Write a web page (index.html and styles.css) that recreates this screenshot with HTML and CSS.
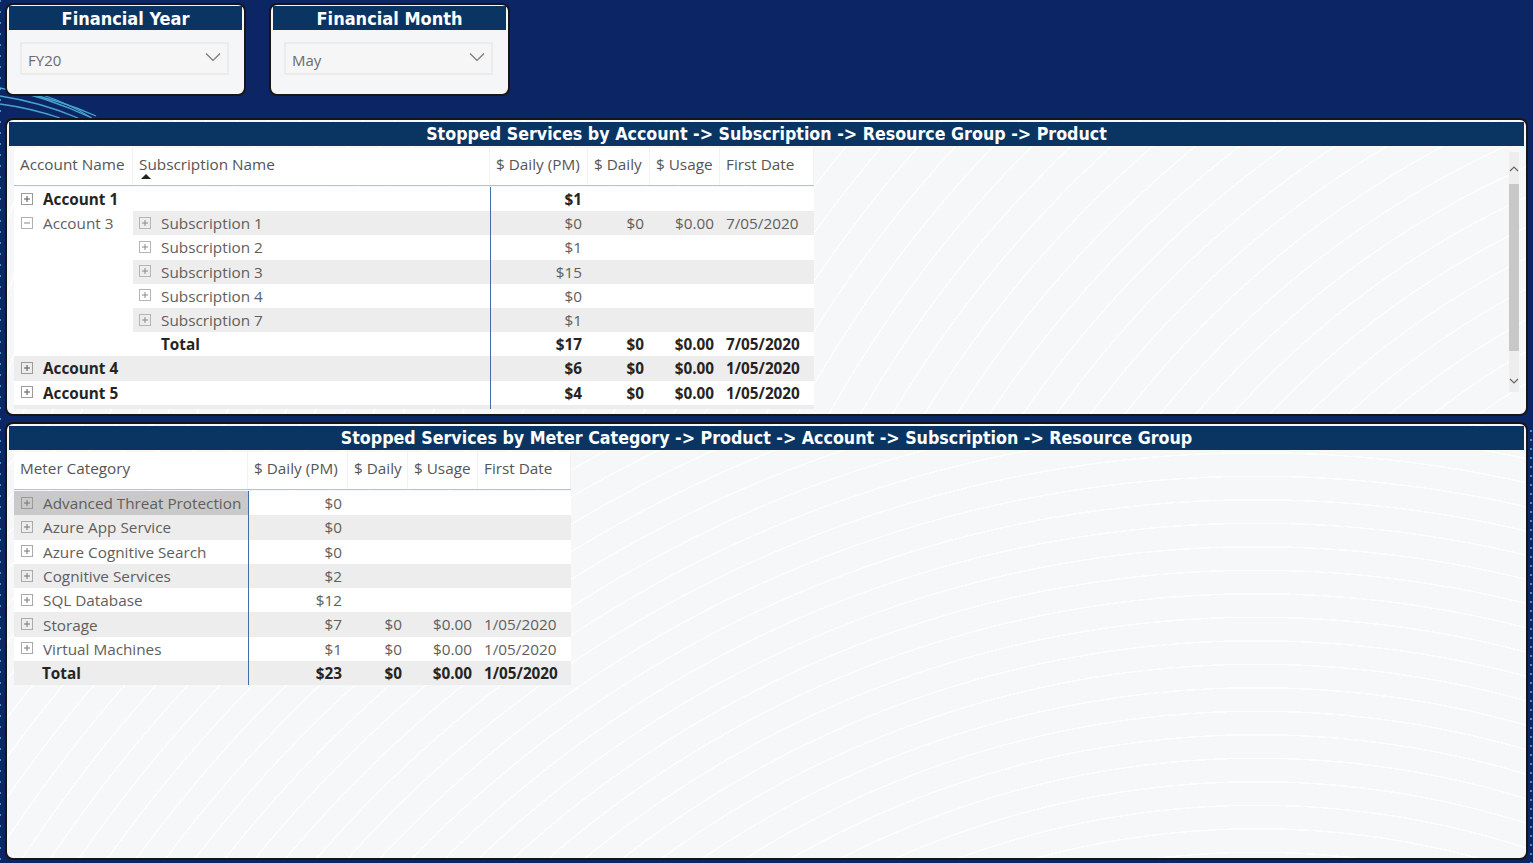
FILE: index.html
```html
<!DOCTYPE html>
<html>
<head>
<meta charset="utf-8">
<title>Stopped Services</title>
<link rel="stylesheet" href="styles.css">
</head>
<body>
<div class="page">
  <div class="slicers">
    <div class="slicer">
      <div class="slicer-title">Financial Year</div>
      <div class="dropdown"><span>FY20</span>
        <svg class="chev" width="16" height="10" viewBox="0 0 16 10"><path d="M1 1.5 L8 8.5 L15 1.5" fill="none" stroke="#777" stroke-width="1.2"/></svg>
      </div>
    </div>
    <div class="slicer">
      <div class="slicer-title">Financial Month</div>
      <div class="dropdown"><span>May</span>
        <svg class="chev" width="16" height="10" viewBox="0 0 16 10"><path d="M1 1.5 L8 8.5 L15 1.5" fill="none" stroke="#777" stroke-width="1.2"/></svg>
      </div>
    </div>
  </div>

  <div class="panel panel1">
    <div class="panel-title">Stopped Services by Account -&gt; Subscription -&gt; Resource Group -&gt; Product</div>
    <div class="panel-body">
      <div class="table t1">
        <div class="thead">
          <div class="th">Account Name</div>
          <div class="th">Subscription Name<div class="sort"></div></div>
          <div class="th r">$ Daily (PM)</div>
          <div class="th r">$ Daily</div>
          <div class="th r">$ Usage</div>
          <div class="th">First Date</div>
        </div>
        <div class="tbody">
          <div class="td b ic"><svg class="exp" viewBox="0 0 12 12"><rect x="0.5" y="0.5" width="11" height="11" fill="none" stroke="#9a9a9a"/><path d="M3 6H9M6 3V9" stroke="#555" stroke-width="1"/></svg>Account 1</div>
          <div class="td"></div>
          <div class="td r b vl">$1</div>
          <div class="td"></div><div class="td"></div><div class="td"></div>

          <div class="td ic acc3"><svg class="exp" viewBox="0 0 12 12"><rect x="0.5" y="0.5" width="11" height="11" fill="none" stroke="#b0b0b0"/><path d="M3 6H9" stroke="#888" stroke-width="1"/></svg>Account 3</div>
          <div class="td g ic2"><svg class="exp" viewBox="0 0 12 12"><rect x="0.5" y="0.5" width="11" height="11" fill="none" stroke="#b5b5b5"/><path d="M3 6H9M6 3V9" stroke="#8a8a8a" stroke-width="1"/></svg>Subscription 1</div>
          <div class="td g r vl">$0</div><div class="td g r">$0</div><div class="td g r">$0.00</div><div class="td g">7/05/2020</div>

          <div class="td ic2"><svg class="exp" viewBox="0 0 12 12"><rect x="0.5" y="0.5" width="11" height="11" fill="none" stroke="#b5b5b5"/><path d="M3 6H9M6 3V9" stroke="#8a8a8a" stroke-width="1"/></svg>Subscription 2</div>
          <div class="td r vl">$1</div><div class="td"></div><div class="td"></div><div class="td"></div>

          <div class="td g ic2"><svg class="exp" viewBox="0 0 12 12"><rect x="0.5" y="0.5" width="11" height="11" fill="none" stroke="#b5b5b5"/><path d="M3 6H9M6 3V9" stroke="#8a8a8a" stroke-width="1"/></svg>Subscription 3</div>
          <div class="td g r vl">$15</div><div class="td g"></div><div class="td g"></div><div class="td g"></div>

          <div class="td ic2"><svg class="exp" viewBox="0 0 12 12"><rect x="0.5" y="0.5" width="11" height="11" fill="none" stroke="#b5b5b5"/><path d="M3 6H9M6 3V9" stroke="#8a8a8a" stroke-width="1"/></svg>Subscription 4</div>
          <div class="td r vl">$0</div><div class="td"></div><div class="td"></div><div class="td"></div>

          <div class="td g ic2"><svg class="exp" viewBox="0 0 12 12"><rect x="0.5" y="0.5" width="11" height="11" fill="none" stroke="#b5b5b5"/><path d="M3 6H9M6 3V9" stroke="#8a8a8a" stroke-width="1"/></svg>Subscription 7</div>
          <div class="td g r vl">$1</div><div class="td g"></div><div class="td g"></div><div class="td g"></div>

          <div class="td b tot1">Total</div>
          <div class="td r b vl">$17</div><div class="td r b">$0</div><div class="td r b">$0.00</div><div class="td b">7/05/2020</div>

          <div class="td g b ic"><svg class="exp" viewBox="0 0 12 12"><rect x="0.5" y="0.5" width="11" height="11" fill="none" stroke="#9a9a9a"/><path d="M3 6H9M6 3V9" stroke="#555" stroke-width="1"/></svg>Account 4</div>
          <div class="td g"></div>
          <div class="td g r b vl">$6</div><div class="td g r b">$0</div><div class="td g r b">$0.00</div><div class="td g b">1/05/2020</div>

          <div class="td b ic"><svg class="exp" viewBox="0 0 12 12"><rect x="0.5" y="0.5" width="11" height="11" fill="none" stroke="#9a9a9a"/><path d="M3 6H9M6 3V9" stroke="#555" stroke-width="1"/></svg>Account 5</div>
          <div class="td"></div>
          <div class="td r b vl">$4</div><div class="td r b">$0</div><div class="td r b">$0.00</div><div class="td b">1/05/2020</div>

          <div class="td g"></div><div class="td g"></div><div class="td g vl"></div><div class="td g"></div><div class="td g"></div><div class="td g"></div>
        </div>
      </div>
      <div class="scrollbar">
        <div class="sb-up"><svg width="10" height="7" viewBox="0 0 10 7"><path d="M1 6 L5 2 L9 6" fill="none" stroke="#666" stroke-width="1.2"/></svg></div>
        <div class="sb-thumb"></div>
        <div class="sb-fill"></div>
        <div class="sb-down"><svg width="10" height="7" viewBox="0 0 10 7"><path d="M1 1 L5 5 L9 1" fill="none" stroke="#666" stroke-width="1.2"/></svg></div>
      </div>
    </div>
  </div>

  <div class="panel panel2">
    <div class="panel-title">Stopped Services by Meter Category -&gt; Product -&gt; Account -&gt; Subscription -&gt; Resource Group</div>
    <div class="panel-body">
      <div class="table t2">
        <div class="thead">
          <div class="th">Meter Category</div>
          <div class="th r">$ Daily (PM)</div>
          <div class="th r">$ Daily</div>
          <div class="th r">$ Usage</div>
          <div class="th">First Date</div>
        </div>
        <div class="tbody">
          <div class="td sel ic"><svg class="exp" viewBox="0 0 12 12"><rect x="0.5" y="0.5" width="11" height="11" fill="none" stroke="#999"/><path d="M3 6H9M6 3V9" stroke="#777" stroke-width="1"/></svg>Advanced Threat Protection</div>
          <div class="td r vl">$0</div><div class="td"></div><div class="td"></div><div class="td"></div>

          <div class="td g ic"><svg class="exp" viewBox="0 0 12 12"><rect x="0.5" y="0.5" width="11" height="11" fill="none" stroke="#aaa"/><path d="M3 6H9M6 3V9" stroke="#777" stroke-width="1"/></svg>Azure App Service</div>
          <div class="td g r vl">$0</div><div class="td g"></div><div class="td g"></div><div class="td g"></div>

          <div class="td ic"><svg class="exp" viewBox="0 0 12 12"><rect x="0.5" y="0.5" width="11" height="11" fill="none" stroke="#aaa"/><path d="M3 6H9M6 3V9" stroke="#777" stroke-width="1"/></svg>Azure Cognitive Search</div>
          <div class="td r vl">$0</div><div class="td"></div><div class="td"></div><div class="td"></div>

          <div class="td g ic"><svg class="exp" viewBox="0 0 12 12"><rect x="0.5" y="0.5" width="11" height="11" fill="none" stroke="#aaa"/><path d="M3 6H9M6 3V9" stroke="#777" stroke-width="1"/></svg>Cognitive Services</div>
          <div class="td g r vl">$2</div><div class="td g"></div><div class="td g"></div><div class="td g"></div>

          <div class="td ic"><svg class="exp" viewBox="0 0 12 12"><rect x="0.5" y="0.5" width="11" height="11" fill="none" stroke="#aaa"/><path d="M3 6H9M6 3V9" stroke="#777" stroke-width="1"/></svg>SQL Database</div>
          <div class="td r vl">$12</div><div class="td"></div><div class="td"></div><div class="td"></div>

          <div class="td g ic"><svg class="exp" viewBox="0 0 12 12"><rect x="0.5" y="0.5" width="11" height="11" fill="none" stroke="#aaa"/><path d="M3 6H9M6 3V9" stroke="#777" stroke-width="1"/></svg>Storage</div>
          <div class="td g r vl">$7</div><div class="td g r">$0</div><div class="td g r">$0.00</div><div class="td g">1/05/2020</div>

          <div class="td ic"><svg class="exp" viewBox="0 0 12 12"><rect x="0.5" y="0.5" width="11" height="11" fill="none" stroke="#aaa"/><path d="M3 6H9M6 3V9" stroke="#777" stroke-width="1"/></svg>Virtual Machines</div>
          <div class="td r vl">$1</div><div class="td r">$0</div><div class="td r">$0.00</div><div class="td">1/05/2020</div>

          <div class="td g b tot2">Total</div>
          <div class="td g r b vl">$23</div><div class="td g r b">$0</div><div class="td g r b">$0.00</div><div class="td g b">1/05/2020</div>
        </div>
      </div>
    </div>
  </div>
</div>
</body>
</html>
```
FILE: styles.css
```css
* { box-sizing: border-box; }

body {
  margin: 0;
  width: 1533px;
  height: 863px;
  overflow: hidden;
  background-color: #0b2565;
  background-image: url("data:image/svg+xml;utf8,<svg xmlns='http://www.w3.org/2000/svg' width='1533' height='863'><g fill='none' stroke='%2357c6e6' stroke-width='1.3' opacity='0.8'><path d='M0 88 Q45 96 92 118'/><path d='M0 96 Q40 102 78 118'/><path d='M0 104 Q30 108 60 118'/><path d='M20 92 Q60 100 96 116'/><path d='M40 94 Q70 104 90 117'/></g><g stroke='%2357c6e6' stroke-width='2' opacity='0.7'><path d='M0 0V863' stroke-dasharray='2 9'/><path d='M1531 430V863' stroke-dasharray='2 7'/></g></svg>");
  background-repeat: no-repeat;
  font-family: "Open Sans", "Noto Sans", sans-serif;
  font-size: 15.3px;
  color: #605e5c;
}

.page {
  display: flex;
  flex-direction: column;
  padding: 3px 5px 0 5px;
}

.slicers {
  display: flex;
  gap: 23px;
  height: 93px;
}

.slicer {
  width: 241px;
  height: 93px;
  background: #f5f6f8;
  border: 2px solid #161616;
  border-radius: 8px;
  padding: 1px 2px 2px 2px;
}

.slicer-title,
.panel-title {
  height: 24px;
  line-height: 25px;
  background: #0a3563;
  color: #fff;
  text-align: center;
  font-family: "DejaVu Sans Condensed", "DejaVu Sans", sans-serif;
  font-weight: bold;
  font-size: 17.7px;
  white-space: nowrap;
}

.slicer-title { font-size: 18px; }

.dropdown {
  margin: 12px 0 0 11px;
  width: 209px;
  height: 33px;
  border: 2px solid #ececec;
  background: #f6f6f7;
  display: flex;
  align-items: center;
  justify-content: space-between;
  padding: 0 6px 0 6px;
  color: #6b6b6b;
  font-size: 15px;
}

.dropdown span { padding-top: 3px; }
.chev { margin-top: -4px; }

.panel {
  width: 1523px;
  background-color: #f6f7f9;
  border: 2px solid #161616;
  border-radius: 8px;
  padding: 2px;
  display: flex;
  flex-direction: column;
}

.panel1 {
  margin-top: 22px;
  height: 298px;
  background-image: repeating-radial-gradient(circle at 1900px 900px, rgba(255,255,255,0) 0 26px, rgba(255,255,255,0.75) 26px 27.5px);
}

.panel2 {
  margin-top: 6px;
  height: 438px;
  background-image: repeating-radial-gradient(circle at 1250px 1250px, rgba(255,255,255,0) 0 22px, rgba(255,255,255,0.75) 22px 23.5px);
}

.panel-body {
  flex: 1;
  display: flex;
  justify-content: space-between;
  min-height: 0;
}

.table {
  margin-left: 5px;
  margin-top: 2px;
}

.thead,
.tbody {
  display: grid;
}

.t1 .thead, .t1 .tbody { grid-template-columns: 119px 357px 98px 62px 70px 94px; }
.t2 .thead, .t2 .tbody { grid-template-columns: 234px 100px 60px 70px 93px; }

.thead {
  height: 38px;
  background: #fff;
  border-bottom: 1px solid #b3c3d6;
}

.th {
  padding: 5px 6px 0 6px;
  line-height: 22px;
  white-space: nowrap;
  color: #555;
  border-right: 1px solid #f2f2f2;
}

.sort {
  width: 0;
  height: 0;
  margin: -1px 0 0 2px;
  border-left: 5px solid transparent;
  border-right: 5px solid transparent;
  border-bottom: 5px solid #222;
}

.tbody {
  grid-auto-rows: 24.2px;
  overflow: hidden;
  padding-top: 1px;
}

.t1 .tbody { height: 223px; }
.t2 .tbody { grid-auto-rows: 24.3px; }

.td {
  background: #fff;
  line-height: 24px;
  padding: 0 6px;
  white-space: nowrap;
  overflow: hidden;
}

.td.g { background: #ededed; }
.td.sel { background: #c9c9c9; }
.td.r { text-align: right; }
.td.b { font-weight: bold; color: #252423; }
.td.vl { border-left: 1px solid #3f6ea8; }

.td.ic, .td.ic2 {
  display: flex;
  align-items: center;
  gap: 10px;
  padding-left: 7px;
}

.td.ic2 { padding-left: 6px; }

.exp {
  width: 12px;
  height: 12px;
  flex: none;
  margin-top: -1px;
}

.td.acc3 {
  grid-row: span 6;
  height: 100%;
  align-items: flex-start;
}
.acc3 .exp { margin-top: 6px; }

.tot1 { padding-left: 28px; }
.tot2 { padding-left: 28px; }

.scrollbar {
  width: 10px;
  height: 240px;
  margin-top: 6px;
  margin-right: 5px;
  background: #eeeeee;
  display: flex;
  flex-direction: column;
  align-items: center;
}

.sb-up {
  height: 30px;
  display: flex;
  align-items: center;
  justify-content: center;
  padding-top: 2px;
}

.sb-thumb {
  width: 10px;
  height: 167px;
  margin-top: 2px;
  background: #c8c8c8;
}

.sb-fill { flex: 1; }

.sb-down {
  height: 22px;
  display: flex;
  align-items: center;
  justify-content: center;
}
```
